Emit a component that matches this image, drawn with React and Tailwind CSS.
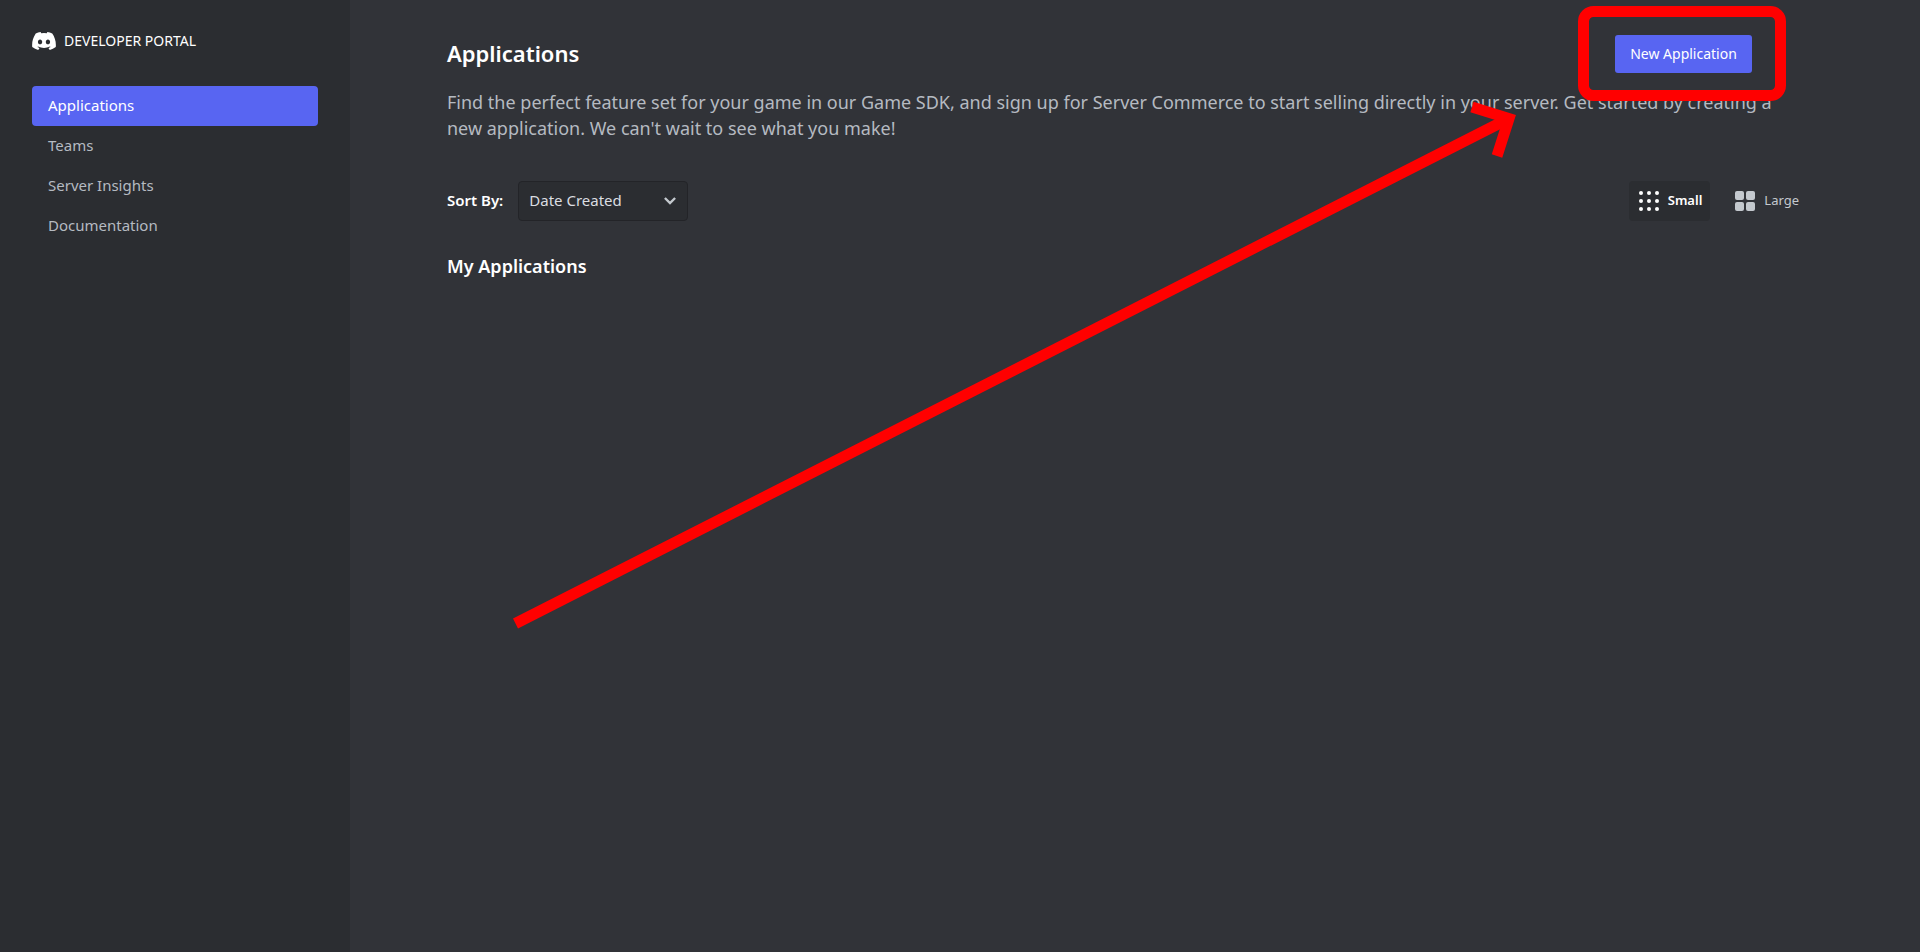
import React from "react";

const navItems = ["Applications", "Teams", "Server Insights", "Documentation"];

function DiscordLogo() {
  return (
    <svg viewBox="0 0 127.14 96.36" className="h-[18px] w-6 shrink-0" fill="#fff" aria-hidden="true">
      <path d="M107.7 8.07A105.15 105.15 0 0 0 81.47 0a72.06 72.06 0 0 0-3.36 6.83 97.68 97.68 0 0 0-29.11 0A72.37 72.37 0 0 0 45.64 0a105.89 105.89 0 0 0-26.25 8.09C2.79 32.65-1.71 56.6.54 80.21a105.73 105.73 0 0 0 32.17 16.15 77.7 77.7 0 0 0 6.89-11.11 68.42 68.42 0 0 1-10.85-5.18c.91-.66 1.8-1.34 2.66-2a75.57 75.57 0 0 0 64.32 0c.87.71 1.76 1.39 2.66 2a68.68 68.68 0 0 1-10.87 5.19 77 77 0 0 0 6.89 11.1 105.25 105.25 0 0 0 32.19-16.14c2.64-27.38-4.51-51.11-18.9-72.15ZM42.45 65.69C36.18 65.69 31 60 31 53s5-12.74 11.43-12.74S54 46 53.89 53s-5.05 12.69-11.44 12.69Zm42.24 0C78.41 65.69 73.25 60 73.25 53s5-12.74 11.44-12.74S96.23 46 96.12 53s-5.04 12.69-11.43 12.69Z" />
    </svg>
  );
}

function SmallGridIcon() {
  return (
    <svg viewBox="0 0 20 20" className="size-5" fill="currentColor" aria-hidden="true">
      {[2, 10, 18].map((y) => [2, 10, 18].map((x) => <circle key={`${x}-${y}`} cx={x} cy={y} r="2" />))}
    </svg>
  );
}

function LargeGridIcon() {
  return (
    <svg viewBox="0 0 20 20" className="size-5" fill="currentColor" aria-hidden="true">
      {[0, 11].map((y) => [0, 11].map((x) => <rect key={`${x}-${y}`} x={x} y={y} width="9" height="9" rx="2" />))}
    </svg>
  );
}

function Annotation() {
  return (
    <svg
      width="1800"
      height="640"
      className="pointer-events-none absolute left-0 top-0"
      fill="none"
      stroke="#ff0000"
      strokeWidth="11"
      aria-hidden="true"
    >
      <rect x="1583.5" y="11.5" width="197" height="84" rx="10" />
      <path d="M515.5 623.5 1506 120" />
      <path d="M1472 107 1509 118.5 1497 156" strokeMiterlimit="10" />
    </svg>
  );
}

export default function App() {
  return (
    <div className="relative flex min-h-screen overflow-hidden bg-[#313338] font-['Noto_Sans',sans-serif] text-white">
      <aside className="w-[350px] shrink-0 bg-[#2b2d31] px-8 pt-8">
        <a href="#" className="flex h-[18px] items-center gap-2 text-sm">
          <DiscordLogo />
          DEVELOPER PORTAL
        </a>
        <nav className="mt-9 flex flex-col">
          {navItems.map((item, i) => (
            <a
              key={item}
              href="#"
              aria-current={i === 0 ? "page" : undefined}
              className={
                i === 0
                  ? "flex h-10 items-center rounded bg-[#5865f2] px-4 pb-0.5 text-[15px] text-white"
                  : "flex h-10 items-center px-4 pb-0.5 text-[15px] text-[#b5bac1]"
              }
            >
              {item}
            </a>
          ))}
        </nav>
      </aside>

      <main className="min-w-0 flex-1 pr-4">
        <div className="mx-auto max-w-[1360px] pt-[35px]">
          <header className="flex items-start justify-between pr-[55px]">
            <h1 className="text-[22px] leading-9 font-semibold">Applications</h1>
            <button type="button" className="h-[38px] w-[137px] rounded-[3px] bg-[#5865f2] text-sm">
              New Application
            </button>
          </header>
          <p className="mt-4 text-lg leading-[26px] text-[#b5bac1]">
            Find the perfect feature set for your game in our Game SDK, and sign up for Server Commerce to start
            selling directly in your server. Get started by creating a new application. We can't wait to see what you
            make!
          </p>

          <div className="mt-10 flex items-center justify-between">
            <div className="flex items-center gap-[15px]">
              <label htmlFor="sort" className="pb-0.5 text-[15px] font-semibold">
                Sort By:
              </label>
              <div className="relative">
                <select
                  id="sort"
                  defaultValue="created"
                  className="h-10 w-[170px] appearance-none rounded border border-[#232428] bg-[#2b2d31] pb-0.5 pl-[10px] text-[15px] text-[#dbdee1]"
                >
                  <option value="created">Date Created</option>
                  <option value="name">Name</option>
                </select>
                <svg
                  viewBox="0 0 12 8"
                  className="pointer-events-none absolute right-3 top-4 h-2 w-3"
                  fill="none"
                  stroke="#c4c9ce"
                  strokeWidth="2.4"
                  aria-hidden="true"
                >
                  <path d="M.9 1 6 6 11.1 1" />
                </svg>
              </div>
            </div>
            <div className="flex gap-[15px]">
              <button
                type="button"
                aria-pressed="true"
                className="flex h-10 items-center gap-[9px] rounded bg-[#2b2d31] pl-[10px] pr-2 text-[13px] font-semibold"
              >
                <SmallGridIcon />
                Small
              </button>
              <button
                type="button"
                aria-pressed="false"
                className="flex h-10 items-center gap-[9px] rounded pl-[10px] pr-2 text-[13px] text-[#c4c9ce]"
              >
                <LargeGridIcon />
                Large
              </button>
            </div>
          </div>

          <h2 className="mt-[31px] text-lg font-semibold">My Applications</h2>
        </div>
      </main>
      <Annotation />
    </div>
  );
}
